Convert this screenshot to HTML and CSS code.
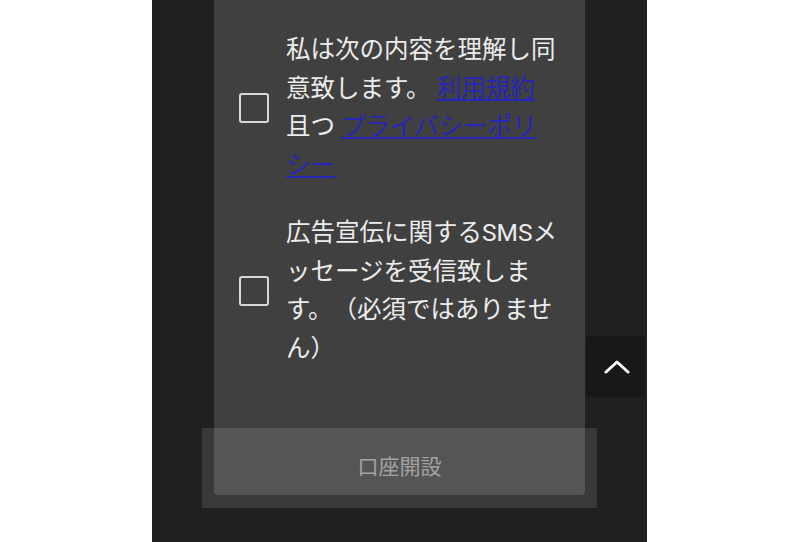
FILE: index.html
```html
<!DOCTYPE html>
<html lang="ja">
<head>
<meta charset="utf-8">
<title>口座開設</title>
<link rel="stylesheet" href="styles.css">
</head>
<body>
<div class="screen">
  <div class="card">
    <label class="agree">
      <span class="box"></span>
      <span class="text">私は次の内容を理解し同意致します。 <a href="#">利用規約</a> 且つ <a href="#">プライバシーポリシー</a></span>
    </label>
    <label class="agree">
      <span class="box"></span>
      <span class="text">広告宣伝に関するSMSメッセージを受信致します。（必須ではありません）</span>
    </label>
  </div>
  <button class="to-top" type="button" aria-label="トップへ">
    <svg width="26" height="14" viewBox="0 0 26 14"><polyline points="2,12 13,2 24,12" fill="none" stroke="#fff" stroke-width="3" stroke-linecap="round" stroke-linejoin="round"/></svg>
  </button>
  <div class="submit-bar">
    <span class="submit-label">口座開設</span>
  </div>
</div>
</body>
</html>
```
FILE: styles.css
```css
html, body {
  margin: 0;
  padding: 0;
  background: #ffffff;
}
body {
  font-family: Roboto, "Noto Sans CJK JP", sans-serif;
}
.screen {
  position: relative;
  width: 495px;
  height: 542px;
  margin: 0 auto 0 152px;
  background: #202020;
  overflow: hidden;
}
.card {
  margin: 0 62px;
  background: #404040;
  border-radius: 0 0 4px 4px;
  padding: 31px 26px 127px 25px;
  height: 495px;
  box-sizing: border-box;
  display: flex;
  flex-direction: column;
  gap: 29px;
}
.agree {
  display: flex;
  align-items: center;
  gap: 17px;
}
.box {
  flex: none;
  width: 30px;
  height: 30px;
  box-sizing: border-box;
  border: 2.5px solid #d8d8d8;
  border-radius: 3px;
}
.text {
  width: 273px;
  font-size: 24.5px;
  line-height: 38.5px;
  color: #ececec;
  text-spacing-trim: space-all;
}
.text a {
  color: #2626b8;
  text-decoration: underline;
}
.to-top {
  position: absolute;
  top: 336px;
  right: 2px;
  width: 59px;
  height: 61px;
  border: 0;
  border-radius: 3px 0 0 3px;
  background: #181818;
  display: flex;
  align-items: center;
  justify-content: center;
  padding: 0 0 0 3px;
}
.submit-bar {
  position: absolute;
  left: 50px;
  top: 428px;
  width: 395px;
  height: 80px;
  background: rgba(255, 255, 255, 0.115);
  display: flex;
  align-items: center;
  justify-content: center;
}
.submit-label {
  font-size: 21px;
  color: #a2a2a2;
  margin-top: -6px;
}
```
